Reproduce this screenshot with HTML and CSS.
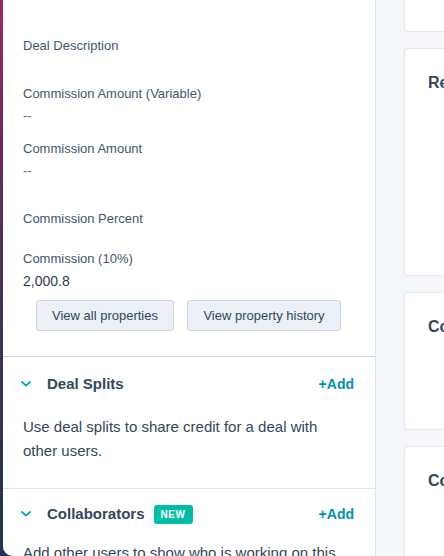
FILE: index.html
```html
<!DOCTYPE html>
<html lang="en">
<head>
<meta charset="utf-8">
<title>Deal record</title>
<link rel="stylesheet" href="styles.css">
</head>
<body>
<div class="window">
  <main class="record">
    <section class="props">
      <div class="prop p-dd"><div class="label">Deal Description</div></div>
      <div class="prop p-cav"><div class="label">Commission Amount (Variable)</div><div class="value empty">--</div></div>
      <div class="prop p-ca"><div class="label">Commission Amount</div><div class="value empty">--</div></div>
      <div class="prop p-cp"><div class="label">Commission Percent</div></div>
      <div class="prop p-c10"><div class="label">Commission (10%)</div><div class="value">2,000.8</div></div>
      <div class="actions">
        <button class="btn btn-all">View all properties</button>
        <button class="btn btn-hist">View property history</button>
      </div>
    </section>

    <section class="panel">
      <header class="panel-head">
        <svg class="chev" width="10" height="6" viewBox="0 0 10 6"><path d="M1 1 L5 4.6 L9 1" fill="none" stroke="#00a4bd" stroke-width="1.8" stroke-linecap="round" stroke-linejoin="round"/></svg>
        <h2 class="panel-title">Deal Splits</h2>
        <a class="add">+Add</a>
      </header>
      <p class="panel-body">Use deal splits to share credit for a deal with other users.</p>
    </section>

    <section class="panel">
      <header class="panel-head">
        <svg class="chev" width="10" height="6" viewBox="0 0 10 6"><path d="M1 1 L5 4.6 L9 1" fill="none" stroke="#00a4bd" stroke-width="1.8" stroke-linecap="round" stroke-linejoin="round"/></svg>
        <h2 class="panel-title">Collaborators</h2>
        <span class="badge">NEW</span>
        <a class="add">+Add</a>
      </header>
      <p class="panel-body">Add other users to show who is working on this deal.</p>
    </section>
  </main>

  <aside class="sidebar">
    <div class="card card-top"></div>
    <div class="card card-a"><h3 class="card-title">Record summary</h3></div>
    <div class="card card-b"><h3 class="card-title">Contacts (1)</h3></div>
    <div class="card card-c"><h3 class="card-title">Companies (1)</h3></div>
  </aside>
</div>
</body>
</html>
```

FILE: styles.css
```css
* { box-sizing: border-box; }

html, body {
  margin: 0;
  padding: 0;
  height: 556px;
  overflow: hidden;
}

body {
  background: linear-gradient(180deg, #a3265f 0%, #6a2a63 25%, #42305f 55%, #2d3159 80%, #243257 100%);
  font-family: "Liberation Sans", Arial, sans-serif;
  color: #33475b;
}

.window {
  margin-left: 3px;
  height: 556px;
  display: flex;
  background: #f5f8fa;
  border-bottom-left-radius: 10px;
  overflow: hidden;
}

.record {
  width: 373px;
  flex: none;
  background: #fff;
  border-right: 1px solid #dfe3eb;
}

.props {
  padding: 36px 0 25px 20px;
  border-bottom: 1px solid #cbd6e2;
}

.label {
  font-size: 13px;
  line-height: 20px;
  color: #3e5771;
}

.value {
  font-size: 14px;
  line-height: 24px;
  color: #2d3e50;
}

.value.empty {
  font-size: 13px;
  color: #516f90;
}

.p-dd { margin-bottom: 28px; }
.p-cav { margin-bottom: 11px; }
.p-ca { margin-bottom: 26px; }
.p-cp { margin-bottom: 20px; }
.p-c10 { margin-bottom: 7px; }

.actions {
  display: flex;
  gap: 13px;
  padding-left: 13px;
}

.btn {
  height: 31px;
  padding: 0 14px;
  background: #eaf0f6;
  border: 1px solid #cbd6e2;
  border-radius: 3px;
  font-family: "Liberation Sans", Arial, sans-serif;
  font-size: 13px;
  color: #33475b;
}

.btn-all { width: 138px; }
.btn-hist { width: 154px; }

.panel {
  border-bottom: 1px solid #dfe3eb;
}

.panel-head {
  display: flex;
  align-items: center;
  padding: 17px 21px 21px 18px;
  height: 58px;
}

.panel + .panel .panel-head {
  padding-top: 15px;
  padding-bottom: 17px;
  height: 52px;
}

.chev {
  flex: none;
  display: block;
}

.panel-title {
  margin: 0 0 0 16px;
  font-size: 15px;
  line-height: 20px;
  font-weight: 700;
  color: #33475b;
}

.badge {
  margin-left: 9px;
  height: 19px;
  padding: 0 7px;
  border-radius: 3px;
  background: #00bda5;
  color: #fff;
  font-size: 10px;
  font-weight: 700;
  line-height: 19px;
  letter-spacing: 0.6px;
}

.add {
  margin-left: auto;
  font-size: 14px;
  font-weight: 700;
  line-height: 20px;
  color: #0091ae;
}

.panel-body {
  margin: 0;
  padding: 0 30px 25px 20px;
  font-size: 15px;
  line-height: 24px;
  color: #33475b;
}

.sidebar {
  flex: 1;
  min-width: 0;
  overflow: hidden;
  padding-left: 28px;
  display: flex;
  flex-direction: column;
  gap: 16px;
  margin-top: -20px;
}

.card {
  width: 320px;
  flex: none;
  background: #fff;
  border: 1px solid #e3e9ef;
  border-radius: 4px;
  padding: 24px 23px;
  box-shadow: 0 0 2px rgba(45, 62, 80, 0.06);
}

.card-top { height: 52px; }
.card-a { height: 228px; }
.card-b { height: 138px; }
.card-c { height: 200px; }

.card-title {
  margin: 0;
  font-size: 16px;
  line-height: 20px;
  font-weight: 700;
  color: #33475b;
  white-space: nowrap;
}
```
